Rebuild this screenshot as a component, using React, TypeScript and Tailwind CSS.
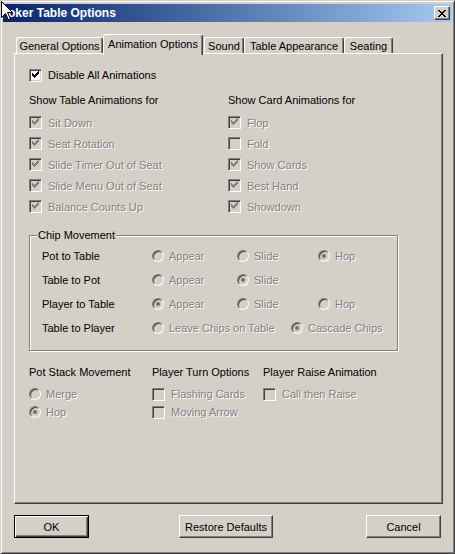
import React from "react";

const CHECK_COLS = [4, 5, 6, 5, 4, 3, 2];

function Check({ checked, disabled }: { checked: boolean; disabled?: boolean }) {
  return (
    <span
      className={`flex w-[13px] h-[13px] shrink-0 border border-t-[#808080] border-l-[#808080] border-b-white border-r-white shadow-[inset_1px_1px_0_#404040,inset_-1px_-1px_0_#d4d0c8] ${
        disabled ? "bg-[#d4d0c8]" : "bg-white"
      }`}
    >
      {checked && (
        <svg width="11" height="11" viewBox="0 0 11 11" shapeRendering="crispEdges" className="block">
          {CHECK_COLS.map((y, i) => (
            <rect key={i} x={i + 2} y={y - 1} width="1" height="3" fill={disabled ? "#808080" : "#000"} />
          ))}
        </svg>
      )}
    </span>
  );
}

function Radio({ checked }: { checked?: boolean }) {
  return (
    <span className="flex items-center justify-center w-[12px] h-[12px] shrink-0 rounded-full border border-t-[#808080] border-l-[#808080] border-r-white border-b-white shadow-[inset_1px_1px_0_#404040,inset_-1px_-1px_0_#d4d0c8] bg-[#d4d0c8]">
      {checked && <span className="w-[4px] h-[4px] rounded-full bg-[#707070]" />}
    </span>
  );
}

const dim = "text-[#808080] [text-shadow:1px_1px_0_#fff]";

function CheckItem({ label, checked, h = "h-[21px]" }: { label: string; checked: boolean; h?: string }) {
  return (
    <div className={`flex items-center ${h}`}>
      <Check checked={checked} disabled />
      <span className={`ml-[6px] ${dim}`}>{label}</span>
    </div>
  );
}

function RadioItem({ label, checked, w }: { label: string; checked?: boolean; w?: string }) {
  return (
    <div className={`flex items-center ${w ?? ""}`}>
      <Radio checked={checked} />
      <span className={`ml-[5px] ${dim}`}>{label}</span>
    </div>
  );
}

const TABLE_ITEMS = ["Sit Down", "Seat Rotation", "Slide Timer Out of Seat", "Slide Menu Out of Seat", "Balance Counts Up"];
const CARD_ITEMS: [string, boolean][] = [
  ["Flop", true],
  ["Fold", false],
  ["Show Cards", true],
  ["Best Hand", true],
  ["Showdown", true],
];

const tabBase =
  "flex justify-center bg-[#d4d0c8] border-t border-l border-r border-t-white border-l-white border-r-[#404040] shadow-[inset_-1px_0_0_#808080] rounded-t-[3px]";

const raised =
  "border border-t-white border-l-white border-r-[#404040] border-b-[#404040] shadow-[inset_-1px_-1px_0_#808080]";

export default function App() {
  return (
    <div className="relative w-[455px] h-[554px] overflow-hidden bg-[#d4d0c8] border border-t-[#d4d0c8] border-l-[#d4d0c8] border-r-[#404040] border-b-[#404040] shadow-[inset_1px_1px_0_#fff,inset_-1px_-1px_0_#808080] px-[2px] pt-[3px] font-['Liberation_Sans',Arial,sans-serif] text-[11px] leading-[14px] text-black">
      {/* title bar */}
      <div className="flex items-center h-[18px] bg-linear-to-r from-[#0a246a] to-[#a6caf0] pr-[2px]">
        <span className="-ml-[3px] font-bold text-[12px] text-white">Poker Table Options</span>
        <span className={`ml-auto flex items-center justify-center w-[16px] h-[14px] bg-[#d4d0c8] ${raised}`}>
          <svg width="8" height="7" viewBox="0 0 8 7" shapeRendering="crispEdges">
            <path d="M0 0h2v1h-2zM6 0h2v1h-2zM1 1h2v1h-2zM5 1h2v1h-2zM2 2h4v1h-4zM3 3h2v1h-2zM2 4h4v1h-4zM1 5h2v1h-2zM5 5h2v1h-2zM0 6h2v1h-2zM6 6h2v1h-2z" fill="#000" />
          </svg>
        </span>
      </div>

      <div className="ml-[11px] w-[429px]">
        {/* tabs */}
        <div className="relative z-10 flex items-end pl-[2px] mt-[12px]">
          <div className={`${tabBase} w-[87px] h-[16px] items-center pt-[1px]`}>General Options</div>
          <div className={`${tabBase} w-[100px] h-[21px] -mb-[2px] items-start pt-[2px] border-r-[#404040]`}>Animation Options</div>
          <div className={`${tabBase} ml-[1px] w-[40px] h-[16px] items-center pt-[1px]`}>Sound</div>
          <div className={`${tabBase} w-[100px] h-[16px] items-center pt-[1px]`}>Table Appearance</div>
          <div className={`${tabBase} w-[49px] h-[16px] items-center pt-[1px]`}>Seating</div>
        </div>

        {/* panel */}
        <div className="h-[451px] border border-t-white border-l-white border-r-[#404040] border-b-[#404040] shadow-[inset_-1px_-1px_0_#808080] pl-[14px]">
          <div className="flex items-center h-[16px] mt-[13px]">
            <Check checked />
            <span className="ml-[6px]">Disable All Animations</span>
          </div>

          <div className="flex mt-[9px]">
            <div className="w-[199px]">
              <div className="flex items-center h-[16px] mb-[4px]">Show Table Animations for</div>
              {TABLE_ITEMS.map((t) => (
                <CheckItem key={t} label={t} checked />
              ))}
            </div>
            <div>
              <div className="flex items-center h-[16px] mb-[4px]">Show Card Animations for</div>
              {CARD_ITEMS.map(([t, c]) => (
                <CheckItem key={t} label={t} checked={c} />
              ))}
            </div>
          </div>

          <fieldset className="mt-[11px] w-[369px] border border-[#808080] shadow-[inset_1px_1px_0_#fff,1px_1px_0_#fff] px-[7px] pt-[2px] pb-[10px]">
            <legend className="px-[1px] bg-[#d4d0c8] leading-[14px]">Chip Movement</legend>
            <div className="pl-[5px]">
              <div className="flex items-center h-[24px]">
                <span className="w-[110px]">Pot to Table</span>
                <RadioItem label="Appear" w="w-[85px]" />
                <RadioItem label="Slide" w="w-[81px]" />
                <RadioItem label="Hop" checked />
              </div>
              <div className="flex items-center h-[24px]">
                <span className="w-[110px]">Table to Pot</span>
                <RadioItem label="Appear" w="w-[85px]" />
                <RadioItem label="Slide" checked />
              </div>
              <div className="flex items-center h-[24px]">
                <span className="w-[110px]">Player to Table</span>
                <RadioItem label="Appear" checked w="w-[85px]" />
                <RadioItem label="Slide" w="w-[81px]" />
                <RadioItem label="Hop" />
              </div>
              <div className="flex items-center h-[24px]">
                <span className="w-[110px]">Table to Player</span>
                <RadioItem label="Leave Chips on Table" w="w-[139px]" />
                <RadioItem label="Cascade Chips" checked />
              </div>
            </div>
          </fieldset>

          <div className="flex mt-[13px]">
            <div className="w-[123px]">
              <div className="flex items-center h-[16px] mb-[5px]">Pot Stack Movement</div>
              <div className="flex items-center h-[18px]">
                <RadioItem label="Merge" />
              </div>
              <div className="flex items-center h-[18px]">
                <RadioItem label="Hop" checked />
              </div>
            </div>
            <div className="w-[111px]">
              <div className="flex items-center h-[16px] mb-[5px]">Player Turn Options</div>
              <CheckItem label="Flashing Cards" checked={false} h="h-[18px]" />
              <CheckItem label="Moving Arrow" checked={false} h="h-[18px]" />
            </div>
            <div>
              <div className="flex items-center h-[16px] mb-[5px]">Player Raise Animation</div>
              <CheckItem label="Call then Raise" checked={false} h="h-[18px]" />
            </div>
          </div>
        </div>

        {/* buttons */}
        <div className="flex mt-[11px]">
          <button className="w-[75px] h-[23px] border border-black bg-[#d4d0c8] shadow-[inset_1px_1px_0_#fff,inset_-1px_-1px_0_#404040,inset_-2px_-2px_0_#808080]">
            OK
          </button>
          <button className={`ml-[90px] w-[94px] h-[23px] bg-[#d4d0c8] ${raised}`}>Restore Defaults</button>
          <button className={`ml-[93px] w-[75px] h-[23px] bg-[#d4d0c8] ${raised}`}>Cancel</button>
        </div>
      </div>

      {/* mouse pointer over the title */}
      <svg className="absolute left-0 top-0 z-20" width="12" height="20" viewBox="0 0 12 20">
        <path d="M0.5 0.5V16.5L4.5 12.5L7.5 19L9.5 18L6.5 11.5H11.5Z" fill="#fff" stroke="#000" strokeWidth="1" />
      </svg>
    </div>
  );
}
